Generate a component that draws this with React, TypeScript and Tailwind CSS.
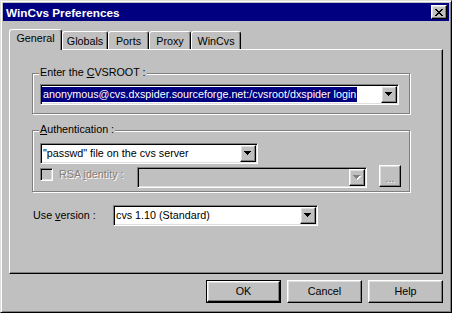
import React from 'react'

const raised = 'border border-t-white border-l-white border-r-black border-b-black shadow-[inset_-1px_-1px_0_#808080,inset_1px_1px_0_#dfdfdf]'
const sunken = 'border border-t-[#808080] border-l-[#808080] border-r-white border-b-white shadow-[inset_1px_1px_0_#000,inset_-1px_-1px_0_#dfdfdf]'
const etched = 'border border-[#808080] shadow-[1px_1px_0_#fff,inset_1px_1px_0_#fff]'
const disabledText = 'text-[#808080] [text-shadow:1px_1px_0_#fff]'

const Arrow = ({ disabled }: { disabled?: boolean }) => (
    <svg width="8" height="5" viewBox="0 0 8 5" shapeRendering="crispEdges">
        {disabled && <path fill="#fff" d="M1 1h7v1H1zM2 2h5v1H2zM3 3h3v1H3zM4 4h1v1H4z" />}
        <path fill={disabled ? '#808080' : '#000'} d="M0 0h7v1H0zM1 1h5v1H1zM2 2h3v1H2zM3 3h1v1H3z" />
    </svg>
)

interface ComboProps {
    value?: string
    className?: string
    selected?: boolean
    disabled?: boolean
}

const Combo: React.FC<ComboProps> = ({ value, className, selected, disabled }) => (
    <div className={`h-[21px] flex p-[1px] ${sunken} ${disabled ? 'bg-[#c0c0c0]' : 'bg-white'} ${className}`}>
        <div className="flex-1 flex items-center overflow-hidden whitespace-nowrap">
            {value && (
                <span className={`px-[1px] leading-[15px] ${selected ? 'bg-[#000080] text-white' : ''}`}>{value}</span>
            )}
        </div>
        <div className={`w-[16px] h-[17px] flex items-center justify-center bg-[#c0c0c0] ${raised}`}>
            <Arrow disabled={disabled} />
        </div>
    </div>
)

interface GroupBoxProps {
    label: React.ReactNode
    className?: string
    children: React.ReactNode
}

const GroupBox: React.FC<GroupBoxProps> = ({ label, className, children }) => (
    <div className={`relative w-[378px] ${etched} ${className}`}>
        <span className="absolute -top-[8px] left-[6px] px-[1px] bg-[#c0c0c0] leading-[13px]">{label}</span>
        {children}
    </div>
)

const tabs = [
    { name: 'Globals', w: 'w-[46px]' },
    { name: 'Ports', w: 'w-[41px]' },
    { name: 'Proxy', w: 'w-[42px]' },
    { name: 'WinCvs', w: 'w-[50px]' },
]

const Button = ({ label, isDefault }: { label: string; isDefault?: boolean }) => (
    <div className={`w-[75px] h-[23px] flex ${isDefault ? 'border border-black' : ''}`}>
        <div className={`flex-1 flex items-center justify-center bg-[#c0c0c0] ${raised}`}>{label}</div>
    </div>
)

export default function App() {
    return (
        <div className="w-[452px] h-[313px] bg-[#c0c0c0] border border-t-[#dfdfdf] border-l-[#dfdfdf] border-r-black border-b-black shadow-[inset_1px_1px_0_#fff,inset_-1px_-1px_0_#808080] p-[2px] flex flex-col font-['Liberation_Sans',Arial,sans-serif] text-[10.75px] text-black leading-[13px] select-none">
            {/* title bar */}
            <div className="h-[18px] bg-[#000080] flex items-center pl-[3px] pr-[2px]">
                <span className="text-white font-bold text-[11.75px]">WinCvs Preferences</span>
                <div className={`ml-auto w-[16px] h-[14px] flex items-center justify-center bg-[#c0c0c0] ${raised}`}>
                    <svg width="8" height="7" viewBox="0 0 8 7" shapeRendering="crispEdges">
                        <path fill="#000" d="M0 0h2v1H0zM6 0h2v1H6zM1 1h2v1H1zM5 1h2v1H5zM2 2h4v1H2zM3 3h2v1H3zM2 4h4v1H2zM1 5h2v1H1zM5 5h2v1H5zM0 6h2v1H0zM6 6h2v1H6z" />
                    </svg>
                </div>
            </div>

            <div className="flex-1 flex flex-col px-[6px] pt-[8px]">
                {/* tabs */}
                <div className="h-[20px] flex items-end">
                    <div className="relative z-10 w-[53px] h-[21px] -mb-[1px] bg-[#c0c0c0] border-l border-t border-r border-l-white border-t-white border-r-black rounded-t-[3px] shadow-[inset_-1px_0_0_#808080] flex items-start justify-center pt-[2px]">
                        General
                    </div>
                    {tabs.map((t) => (
                        <div key={t.name} className={`${t.w} h-[18px] border-l border-t border-r border-l-white border-t-white border-r-black rounded-t-[3px] shadow-[inset_-1px_0_0_#808080] flex items-center justify-center pt-[1px]`}>
                            {t.name}
                        </div>
                    ))}
                </div>

                {/* panel */}
                <div className="h-[225px] border border-t-white border-l-white border-r-black border-b-black shadow-[inset_-1px_-1px_0_#808080] pl-[22px] pt-[23px] flex flex-col">
                    <GroupBox label={<>Enter the <u>C</u>VSROOT :</>} className="pt-[10px] pl-[7px] pb-[8px]">
                        <Combo className="w-[359px]" selected value="anonymous@cvs.dxspider.sourceforge.net:/cvsroot/dxspider login" />
                    </GroupBox>

                    <GroupBox label={<><u>A</u>uthentication :</>} className="mt-[16px] pt-[12px] pl-[7px] pb-[3px]">
                        <Combo className="w-[218px]" value={'"passwd" file on the cvs server'} />
                        <div className="mt-[1px] flex items-start">
                            <div className={`mt-[3px] w-[13px] h-[13px] bg-[#c0c0c0] ${sunken}`} />
                            <span className={`ml-[6px] w-[78px] mt-[3px] ${disabledText}`}>RSA <u>i</u>dentity :</span>
                            <Combo className="w-[230px] mt-[2px]" disabled />
                            <div className={`ml-[12px] w-[22px] h-[22px] flex items-center justify-center bg-[#c0c0c0] ${raised}`}>
                                <span className={`${disabledText} leading-[10px] pt-[4px]`}>...</span>
                            </div>
                        </div>
                    </GroupBox>

                    <div className="mt-[13px] flex items-center">
                        <span className="w-[81px] pl-[1px]">Use <u>v</u>ersion :</span>
                        <Combo className="w-[205px]" value="cvs 1.10 (Standard)" />
                    </div>
                </div>

                {/* buttons */}
                <div className="mt-[6px] flex justify-end gap-[6px]">
                    <Button label="OK" isDefault />
                    <Button label="Cancel" />
                    <Button label="Help" />
                </div>
            </div>
        </div>
    )
}
